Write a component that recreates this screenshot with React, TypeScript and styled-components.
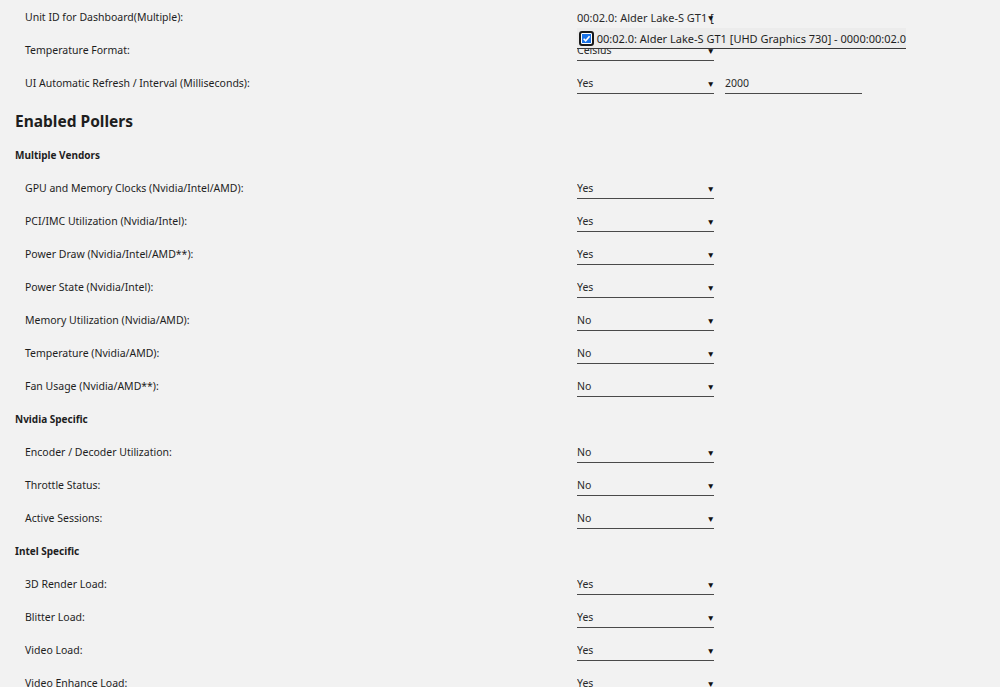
import styled, { createGlobalStyle } from 'styled-components';

const GlobalStyle = createGlobalStyle`
  html, body {
    margin: 0;
    padding: 0;
    background: #f2f2f2;
  }
  body {
    font-family: 'Noto Sans', 'Open Sans', sans-serif;
    color: #1e1e1e;
  }
`;

const Page = styled.div`
  padding: 1px 15px 0 15px;
  height: 687px;
  overflow: hidden;
  box-sizing: border-box;
`;

const Row = styled.div`
  display: grid;
  grid-template-columns: 552px auto;
  align-items: center;
  height: 33px;
  padding-left: 10px;
  font-size: 10.5px;
  position: relative;
`;

const Label = styled.span`
  white-space: nowrap;
  margin-top: -2px;
`;

const Controls = styled.div`
  display: flex;
  align-items: center;
  gap: 11px;
`;

const SelectBox = styled.div<{ $bare?: boolean }>`
  position: relative;
  width: 137px;
  height: 20px;
  box-sizing: border-box;
  border-bottom: ${(p) => (p.$bare ? 'none' : '1.5px solid #4a4a4a')};
  display: flex;
  align-items: center;
  overflow: hidden;
  white-space: nowrap;
  color: #2a2a2a;
  font-size: ${(p) => (p.$bare ? '11px' : '10.5px')};
`;

const Arrow = styled.span`
  position: absolute;
  right: -1px;
  top: 4px;
  font-size: 8.5px;
  color: #111;
`;

const TextInput = styled.div`
  width: 137px;
  height: 20px;
  box-sizing: border-box;
  border-bottom: 1.5px solid #4a4a4a;
  display: flex;
  align-items: center;
  color: #2a2a2a;
`;

const Heading = styled.h2`
  margin: 0;
  font-size: 15.5px;
  font-weight: 700;
  height: 39px;
  padding-top: 10px;
  line-height: 22px;
  box-sizing: border-box;
`;

const SubHeading = styled.h3`
  margin: 0;
  font-size: 10px;
  font-weight: 700;
  height: 33px;
  line-height: 33px;
`;

const Popup = styled.div`
  position: absolute;
  left: 562px;
  top: 27px;
  width: 327px;
  height: 20px;
  background: #ececec;
  border-bottom: 1.5px solid #3a3a3a;
  display: flex;
  align-items: center;
  gap: 3px;
  padding-left: 2px;
  font-size: 11px;
  white-space: nowrap;
  color: #1e1e1e;
  z-index: 2;
`;

const Check = styled.span`
  width: 15px;
  height: 15px;
  box-sizing: border-box;
  border: 2px solid #1a1a1a;
  border-radius: 3px;
  background: #1a73e8;
  display: flex;
  align-items: center;
  justify-content: center;
  box-shadow: inset 0 0 0 1px #fff;
`;

type Item = { label: string; value: string };

const Select = ({ value }: { value: string }) => (
  <SelectBox>
    {value}
    <Arrow>▼</Arrow>
  </SelectBox>
);

const Setting = ({ label, value }: Item) => (
  <Row>
    <Label>{label}</Label>
    <Controls>
      <Select value={value} />
    </Controls>
  </Row>
);

const vendors: Item[] = [
  { label: 'GPU and Memory Clocks (Nvidia/Intel/AMD):', value: 'Yes' },
  { label: 'PCI/IMC Utilization (Nvidia/Intel):', value: 'Yes' },
  { label: 'Power Draw (Nvidia/Intel/AMD**):', value: 'Yes' },
  { label: 'Power State (Nvidia/Intel):', value: 'Yes' },
  { label: 'Memory Utilization (Nvidia/AMD):', value: 'No' },
  { label: 'Temperature (Nvidia/AMD):', value: 'No' },
  { label: 'Fan Usage (Nvidia/AMD**):', value: 'No' },
];

const nvidia: Item[] = [
  { label: 'Encoder / Decoder Utilization:', value: 'No' },
  { label: 'Throttle Status:', value: 'No' },
  { label: 'Active Sessions:', value: 'No' },
];

const intel: Item[] = [
  { label: '3D Render Load:', value: 'Yes' },
  { label: 'Blitter Load:', value: 'Yes' },
  { label: 'Video Load:', value: 'Yes' },
  { label: 'Video Enhance Load:', value: 'Yes' },
];

export default function App() {
  return (
    <>
      <GlobalStyle />
      <Page>
        <Row>
          <Label>Unit ID for Dashboard(Multiple):</Label>
          <Controls>
            {/* multi select, open: the chosen unit shows cut off, the list lies over the next row */}
            <SelectBox $bare>
              00:02.0: Alder Lake-S GT1 [UHD Graphics 730]
              <Arrow>▼</Arrow>
            </SelectBox>
          </Controls>
          <Popup>
            <Check>
              <svg width="9" height="9" viewBox="0 0 10 10">
                <path d="M1.8 5.3 L4.1 7.6 L8.4 2.4" stroke="#fff" strokeWidth="1.8" fill="none" />
              </svg>
            </Check>
            00:02.0: Alder Lake-S GT1 [UHD Graphics 730] - 0000:00:02.0
          </Popup>
        </Row>
        <Setting label="Temperature Format:" value="Celsius" />
        <Row>
          <Label>UI Automatic Refresh / Interval (Milliseconds):</Label>
          <Controls>
            <Select value="Yes" />
            <TextInput>2000</TextInput>
          </Controls>
        </Row>
        <Heading>Enabled Pollers</Heading>
        <SubHeading>Multiple Vendors</SubHeading>
        {vendors.map((v) => (
          <Setting key={v.label} {...v} />
        ))}
        <SubHeading>Nvidia Specific</SubHeading>
        {nvidia.map((v) => (
          <Setting key={v.label} {...v} />
        ))}
        <SubHeading>Intel Specific</SubHeading>
        {intel.map((v) => (
          <Setting key={v.label} {...v} />
        ))}
      </Page>
    </>
  );
}
